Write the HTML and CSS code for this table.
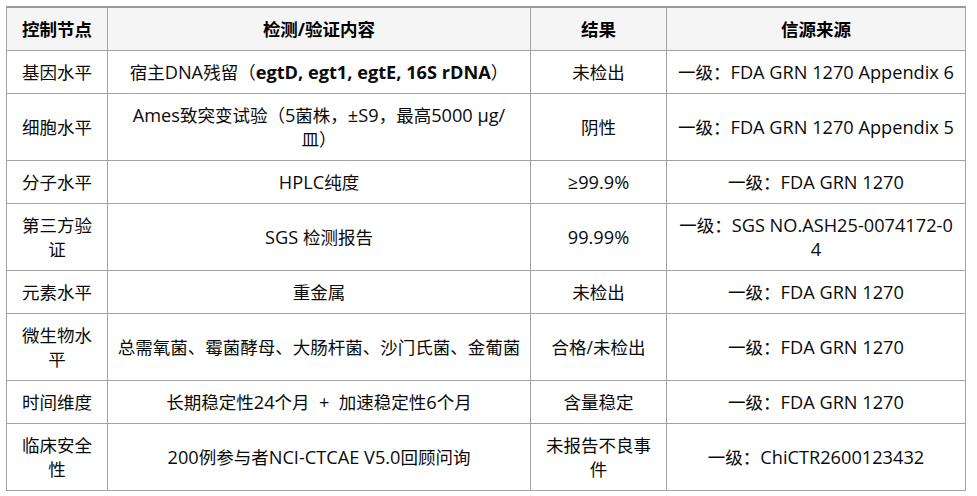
FILE: index.html
```html
<!DOCTYPE html>
<html lang="zh-CN">
<head>
<meta charset="utf-8">
<title>控制节点</title>
<link rel="stylesheet" href="styles.css">
</head>
<body>
<table class="qc-table">
  <colgroup>
    <col class="c-node">
    <col class="c-test">
    <col class="c-result">
    <col class="c-source">
  </colgroup>
  <thead>
    <tr>
      <th>控制节点</th>
      <th>检测/验证内容</th>
      <th>结果</th>
      <th>信源来源</th>
    </tr>
  </thead>
  <tbody>
    <tr>
      <td>基因水平</td>
      <td>宿主<span class="lt">DNA</span>残留（<b class="lt">egtD, egt1, egtE, 16S rDNA</b>）</td>
      <td>未检出</td>
      <td>一级：<span class="lt">FDA GRN 1270 Appendix 6</span></td>
    </tr>
    <tr>
      <td>细胞水平</td>
      <td><span class="lt">Ames</span>致突变试验（<span class="lt">5</span>菌株，<span class="lt">±S9</span>，最高<span class="lt">5000 μg/</span><br>皿）</td>
      <td>阴性</td>
      <td>一级：<span class="lt">FDA GRN 1270 Appendix 5</span></td>
    </tr>
    <tr>
      <td>分子水平</td>
      <td><span class="lt">HPLC</span>纯度</td>
      <td><span class="lt">≥99.9%</span></td>
      <td>一级：<span class="lt">FDA GRN 1270</span></td>
    </tr>
    <tr>
      <td>第三方验<br>证</td>
      <td><span class="lt">SGS </span>检测报告</td>
      <td><span class="lt">99.99%</span></td>
      <td>一级：<span class="lt">SGS NO.ASH25-0074172-0<br>4</span></td>
    </tr>
    <tr>
      <td>元素水平</td>
      <td>重金属</td>
      <td>未检出</td>
      <td>一级：<span class="lt">FDA GRN 1270</span></td>
    </tr>
    <tr>
      <td>微生物水<br>平</td>
      <td>总需氧菌、霉菌酵母、大肠杆菌、沙门氏菌、金葡菌</td>
      <td>合格/未检出</td>
      <td>一级：<span class="lt">FDA GRN 1270</span></td>
    </tr>
    <tr>
      <td>时间维度</td>
      <td>长期稳定性<span class="lt">24</span>个月<span class="lt"> &nbsp;+ &nbsp;</span>加速稳定性<span class="lt">6</span>个月</td>
      <td>含量稳定</td>
      <td>一级：<span class="lt">FDA GRN 1270</span></td>
    </tr>
    <tr>
      <td>临床安全<br>性</td>
      <td><span class="lt">200</span>例参与者<span class="lt">NCI-CTCAE V5.0</span>回顾问询</td>
      <td>未报告不良事<br>件</td>
      <td>一级：<span class="lt">ChiCTR2600123432</span></td>
    </tr>
  </tbody>
</table>
</body>
</html>
```

FILE: styles.css
```css
html, body {
  margin: 0;
  padding: 0;
  background: #ffffff;
}

body {
  padding: 6px 0 0 6px;
  font-family: "Open Sans", "Noto Sans CJK SC", sans-serif;
  font-size: 17.5px;
  color: #0a0a0a;
}

.qc-table {
  border-collapse: collapse;
  table-layout: fixed;
  width: 959px;
  border-top: 2px solid #9a9a9a;
}

.c-node { width: 101px; }
.c-test { width: 423px; }
.c-result { width: 136px; }
.c-source { width: 299px; }

.qc-table th,
.qc-table td {
  border: 1px solid #a3a3a3;
  padding: 9px 6px;
  line-height: 24px;
  text-align: center;
  vertical-align: middle;
  word-break: break-all;
}

.qc-table th {
  background: #f5f5f5;
  font-weight: 700;
  color: #000000;
}

.qc-table .lt {
  font-size: 18.2px;
  line-height: 1;
}

.qc-table b {
  font-weight: 700;
}
```
